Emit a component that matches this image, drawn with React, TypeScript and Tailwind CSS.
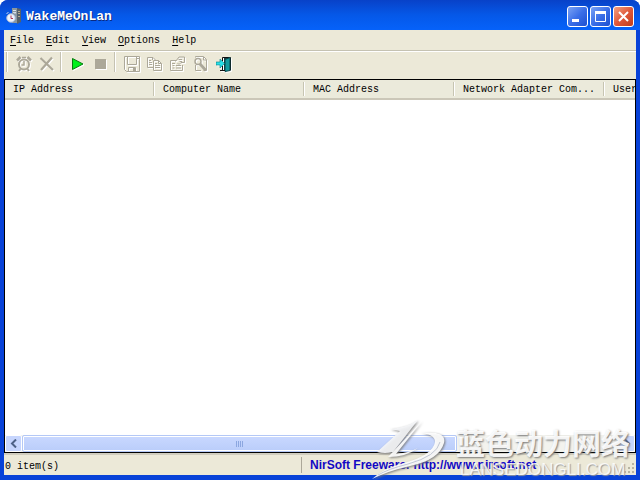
import type { ReactNode } from "react";

const menus = ["File", "Edit", "View", "Options", "Help"];
const columns = ["IP Address", "Computer Name", "MAC Address", "Network Adapter Com...", "User Text"];

const AppIcon = () => (
  <svg width="16" height="16" viewBox="0 0 16 16">
    <path d="M6 0h5v15H6z" fill="#8b979f" />
    <path d="M11 0l4 1v13l-4 2z" fill="#56616a" />
    <path d="M7 2.5h3M7 4.5h3" stroke="#dce4ea" />
    <path d="M12 3.500h2M12 5.500h2M12 8.500h2" stroke="#b7a98c" />
    <circle cx="5" cy="10" r="4.300" fill="#eef3fb" stroke="#9fb3d6" />
    <path d="M5 7.500v3h2" stroke="#b03a58" fill="none" />
    <path d="M.5 6l2-2M7.500 4l2 2" stroke="#c9d6ea" />
  </svg>
);

const AlarmIcon = () => (
  <g stroke="#aca899" fill="none">
    <circle cx="8" cy="8.5" r="5" strokeWidth="2" />
    <path d="M1 4.5L4.5 1M15 4.5L11.5 1" strokeWidth="2.5" />
    <path d="M8 5v4H5.5M6 1.5h4" strokeWidth="1.5" />
    <path d="M4.5 13L3 15M11.5 13L13 15" strokeWidth="2" />
  </g>
);

const DeleteIcon = () => (
  <path d="M1.500 2l12.500 12M13 1.500L2 14" stroke="#aca899" strokeWidth="2.200" fill="none" />
);

const PlayIcon = () => (
  <path d="M2.500 2.500v11L13 8z" fill="#00f01c" stroke="#087a10" strokeLinejoin="round" />
);

const StopIcon = () => <path d="M2 3h11v10H2z" fill="#aca899" />;

const SaveIcon = () => (
  <g stroke="#aca899" fill="none">
    <path d="M.5 .5h15v15H2.5l-2-2z" />
    <path d="M3.5 1v7.500h9V1M4.500 15.500v-4h7v4" />
    <path d="M10 12v3" strokeWidth="2" />
    <path d="M13 2.500h2" />
  </g>
);

const CopyIcon = () => (
  <g stroke="#aca899" fill="none">
    <path d="M6 11.500H.5v-10H6l2.500 2.500" />
    <path d="M5.500 1.500V4M2 4.500h2M2 6.500h3M2 8.500h3" />
    <path d="M6.500 4.500h5l3 3v7h-8zM11.500 4.500v3h3M8 7.500h2M8 9.500h5M8 11.500h5" />
  </g>
);

const PropertiesIcon = () => (
  <g stroke="#aca899" fill="none">
    <path d="M6 4.500H.5v10h12V9" />
    <path d="M2 7.500h3M2.500 9.500h2M6 9.500h5M2.500 12h2M6 12h5" />
    <path d="M5.500 5.500L9 1h5.500v5.500H11L9 8.500 7.500 7M8.500 3.500H12M9.500 5.500H12" />
  </g>
);

const FindIcon = () => (
  <g stroke="#aca899" fill="none">
    <path d="M2.500 1.500V.5h8l3 3v11h-3M2.500 9v5.500H8" />
    <circle cx="5" cy="5.500" r="3" strokeWidth="1.500" />
    <path d="M7 8l6 6.500" strokeWidth="3" />
    <path d="M10.500 1v3h3" />
  </g>
);

const ExitIcon = () => (
  <g>
    <path d="M6.500 5V1.500h8v13M6.500 10v4.500" fill="none" stroke="#111" />
    <path d="M8 2h6v12H8z" fill="#123c40" />
    <path d="M9 3.500l5-2v13l-5 1z" fill="#139c9f" stroke="#0b4448" />
    <path d="M0 6h4V3l4.500 4.500L4 12V9H0z" fill="#27dfe6" stroke="#087b82" strokeWidth=".6" />
    <path d="M4 14.500h5" stroke="#111" />
  </g>
);

const ToolButton = ({ label, children }: { label: string; children: ReactNode }) => (
  <button aria-label={label} className="flex h-6 w-[23px] items-center justify-center">
    <svg width="16" height="16" viewBox="0 0 16 16" className="drop-shadow-[1px_1px_0_#ffffff]">
      {children}
    </svg>
  </button>
);

const Separator = () => <div className="mr-1 ml-[2px] h-5 w-[2px] border-l border-[#c5c2b2] border-r border-r-white" />;

const CaptionButton = ({ label, close, children }: { label: string; close?: boolean; children: ReactNode }) => (
  <button
    aria-label={label}
    className={`flex size-[21px] items-center justify-center rounded-[3px] border border-white bg-linear-to-br ${
      close ? "from-[#f0a080] via-[#e0583a] to-[#c03c18]" : "from-[#7ba2f4] via-[#3b6fe8] to-[#1c4fd0]"
    }`}
  >
    <svg width="15" height="15" viewBox="0 0 15 15" className="shrink-0" fill="none" stroke="#fff">
      {children}
    </svg>
  </button>
);

const Watermark = () => (
  <div className="pointer-events-none absolute right-0 bottom-0 flex w-[270px] items-end" aria-hidden="true">
    <svg width="86" height="62" viewBox="0 0 86 62" className="shrink-0 drop-shadow-[1px_1px_1px_#777777]">
      <path d="M20 11Q36 10 48 2L23 34Q15 36 7 34L30 13Q25 12 20 11Z" fill="#f6f7fa" fillOpacity=".9" />
      <path d="M52 3L26 36Q38 35 48 30Q36 39 18 39Z" fill="#fff" fillOpacity=".9" />
      <path d="M50 15Q77 12 74 25Q69 42 40 48Q18 53 2 61Q14 50 34 45Q63 37 65 24Q65 16 50 15Z" fill="#fff" fillOpacity=".92" />
      <path d="M70 24Q67 38 38 46Q18 51 8 57" fill="none" stroke="#a9b1c4" strokeWidth=".7" />
    </svg>
    <div className="flex h-[62px] flex-1 flex-col whitespace-nowrap">
      <div className="mt-1 h-10 font-['Noto_Sans_CJK_SC',sans-serif] text-[29px] leading-10 font-bold text-white/90 [text-shadow:1px_1px_2px_#777777]">
        蓝色动力网络
      </div>
      <div className="pl-1 font-['Liberation_Sans',sans-serif] text-[17px] leading-4 text-white/80 [text-shadow:1px_1px_1px_#999999]">
        LANSEDONGLI.COM
      </div>
    </div>
  </div>
);

const App = () => {
  return (
    <div className="relative flex h-screen flex-col overflow-hidden rounded-t-lg bg-[#0842d8] font-['Liberation_Mono',monospace] text-[10px] text-black">
      <header className="flex h-[30px] shrink-0 items-center bg-linear-to-b from-[#0842c8] via-[#0558e8] to-[#0662fa] pt-[2px] pr-[6px] pl-[6px]">
        <AppIcon />
        <h1 className="ml-1 flex-1 pt-[2px] text-[13px] leading-4 font-bold text-white [text-shadow:1px_1px_0_#0a2a80]">WakeMeOnLan</h1>
        <div className="flex gap-[2px]">
          <CaptionButton label="Minimize">
            <path d="M2 11.500h7" strokeWidth="3" />
          </CaptionButton>
          <CaptionButton label="Maximize">
            <path d="M2.500 3v9.500h10V3" />
            <path d="M2 3.500h11" strokeWidth="3" />
          </CaptionButton>
          <CaptionButton label="Close" close>
            <path d="M3 3l9 9M12 3l-9 9" strokeWidth="2" />
          </CaptionButton>
        </div>
      </header>

      <div className="mx-1 mb-[5px] flex min-h-0 flex-1 flex-col bg-[#ece9d8]">
        <nav className="flex h-[21px] shrink-0 items-center gap-3 border-b border-[#c5c2b2] pt-[2px] pl-[6px]">
          {menus.map((menu) => (
            <button key={menu} className="leading-4">
              <span className="underline underline-offset-2">{menu[0]}</span>
              {menu.slice(1)}
            </button>
          ))}
        </nav>

        {/* Toolbar */}
        <div className="flex h-7 shrink-0 items-start border-t border-white">
          <Separator />
          <ToolButton label="Wake up"><AlarmIcon /></ToolButton>
          <ToolButton label="Delete"><DeleteIcon /></ToolButton>
          <Separator />
          <ToolButton label="Start scan"><PlayIcon /></ToolButton>
          <ToolButton label="Stop scan"><StopIcon /></ToolButton>
          <Separator />
          <ToolButton label="Save"><SaveIcon /></ToolButton>
          <ToolButton label="Copy"><CopyIcon /></ToolButton>
          <ToolButton label="Properties"><PropertiesIcon /></ToolButton>
          <ToolButton label="Find"><FindIcon /></ToolButton>
          <ToolButton label="Exit"><ExitIcon /></ToolButton>
        </div>

        {/* List */}
        <main className="flex min-h-0 flex-1 flex-col overflow-hidden border border-black bg-white">
          <div className="min-h-0 flex-1 overflow-hidden">
            <table className="w-[750px] table-fixed border-collapse">
              <thead>
                <tr className="border-b-2 border-[#cbc7b8] bg-[#ebeadb]">
                  {columns.map((column) => (
                    <th key={column} className="p-0 text-left font-normal">
                      <div className="flex h-[18px] items-center pl-2">
                        <span className="flex-1 pt-[2px] leading-4 whitespace-nowrap">{column}</span>
                        <span className="h-[14px] w-[2px] border-r border-l border-r-white border-l-[#c7c5b2]" />
                      </div>
                    </th>
                  ))}
                </tr>
              </thead>
            </table>
          </div>
          <div className="flex h-[17px] shrink-0 bg-[#f3f3ee]">
            <button aria-label="Scroll left" className="flex w-[17px] items-center justify-center rounded-xs border border-white bg-[#c6d5fd]">
              <svg width="8" height="9" viewBox="0 0 8 9" fill="none" stroke="#4d6185" strokeWidth="2">
                <path d="M6 .5l-4 4 4 4" />
              </svg>
            </button>
            <div className="flex flex-1">
              <div className="flex w-[73%] items-center justify-center gap-px rounded-xs border border-[#b4c8f6] bg-linear-to-b from-[#c9d8ff] to-[#bacdfa] outline -outline-offset-2 outline-white">
                {[0, 1, 2, 3].map((n) => (
                  <span key={n} className="h-[6px] w-px bg-[#8ca7e0]" />
                ))}
              </div>
            </div>
            <button aria-label="Scroll right" className="flex w-[17px] items-center justify-center rounded-xs border border-white bg-[#c6d5fd]">
              <svg width="8" height="9" viewBox="0 0 8 9" fill="none" stroke="#4d6185" strokeWidth="2">
                <path d="M2 .5l4 4-4 4" />
              </svg>
            </button>
          </div>
        </main>

        <footer className="flex h-[22px] shrink-0 items-center border-t-2 border-[#d0cdbf]">
          <span className="w-[47%] pt-[2px] pl-px">0 item(s)</span>
          <div className="flex h-4 flex-1 items-center gap-1 border-l border-[#aca899] pl-2 font-['Liberation_Sans',sans-serif] text-[12px] font-bold text-[#1208c4]">
            <span>NirSoft Freeware.</span>
            <a href="http://www.nirsoft.net">http://www.nirsoft.net</a>
          </div>
          <svg width="12" height="12" viewBox="0 0 12 12" className="self-end" fill="#b8b4a2">
            <path d="M8 0h2v2H8zM4 4h2v2H4zM8 4h2v2H8zM0 8h2v2H0zM4 8h2v2H4zM8 8h2v2H8z" />
          </svg>
        </footer>
      </div>
      <Watermark />
    </div>
  );
};

export default App;
